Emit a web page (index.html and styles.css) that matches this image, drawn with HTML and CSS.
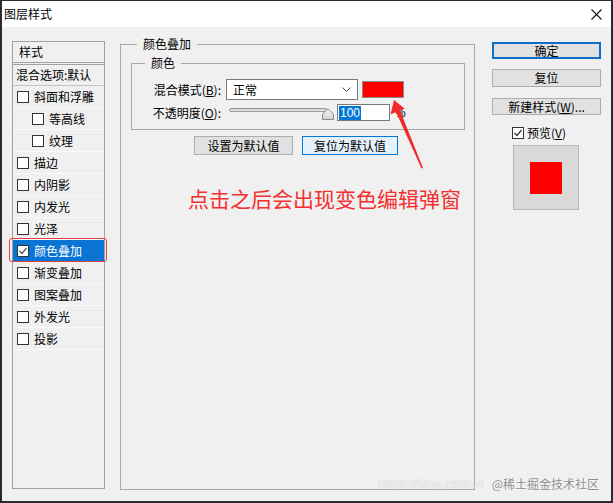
FILE: index.html
```html
<!DOCTYPE html>
<html lang="zh">
<head>
<meta charset="utf-8">
<title>图层样式</title>
<link rel="stylesheet" href="styles.css">
</head>
<body>
<div class="window">
  <div class="titlebar">
    <span class="title">图层样式</span>
    <svg class="close" width="11" height="11" viewBox="0 0 11 11"><path d="M0.5 0.5 L10.5 10.5 M10.5 0.5 L0.5 10.5" stroke="#111" stroke-width="1.1" fill="none"/></svg>
  </div>
  <div class="content">
    <div class="stylelist">
      <div class="sl-head">样式</div>
      <div class="sl-blend">混合选项:默认</div>
      <div class="sl-row"><span class="cb"></span>斜面和浮雕</div>
      <div class="sl-row sub"><span class="cb"></span>等高线</div>
      <div class="sl-row sub"><span class="cb"></span>纹理</div>
      <div class="sl-row"><span class="cb"></span>描边</div>
      <div class="sl-row"><span class="cb"></span>内阴影</div>
      <div class="sl-row"><span class="cb"></span>内发光</div>
      <div class="sl-row"><span class="cb"></span>光泽</div>
      <div class="sl-row selected"><span class="cb"><svg width="10" height="10" viewBox="0 0 10 10"><polyline points="1.5,5 4,7.5 8.5,2" stroke="#555" stroke-width="1.2" fill="none"/></svg></span>颜色叠加<span class="mark"></span></div>
      <div class="sl-row"><span class="cb"></span>渐变叠加</div>
      <div class="sl-row"><span class="cb"></span>图案叠加</div>
      <div class="sl-row"><span class="cb"></span>外发光</div>
      <div class="sl-row"><span class="cb"></span>投影</div>
    </div>

    <div class="group main">
      <div class="legend main-legend">颜色叠加</div>
      <div class="group inner">
        <div class="legend inner-legend">颜色</div>
        <div class="frow r1">
          <span class="lbl">混合模式(<u>B</u>):</span>
          <div class="select"><span>正常</span><svg width="9" height="6" viewBox="0 0 9 6"><polyline points="0.5,0.5 4.5,4.5 8.5,0.5" stroke="#444" stroke-width="1" fill="none"/></svg></div>
          <div class="swatch"></div>
        </div>
        <div class="frow r2">
          <span class="lbl">不透明度(<u>O</u>):</span>
          <div class="slider">
            <div class="track"></div>
            <svg class="thumb" width="12" height="12" viewBox="0 0 12 12"><defs><linearGradient id="tg" x1="0" y1="0" x2="0" y2="1"><stop offset="0" stop-color="#f4f4f4"/><stop offset="1" stop-color="#d4d4d4"/></linearGradient></defs><polygon points="0.5,11.5 0.5,6 6,0.8 11.5,6 11.5,11.5" fill="url(#tg)" stroke="#8a8a8a" stroke-width="1"/></svg>
          </div>
          <div class="num"><span class="sel">100</span></div>
          <span class="pct">%</span>
        </div>
      </div>
      <div class="btnrow">
        <button class="btn">设置为默认值</button>
        <button class="btn focus">复位为默认值</button>
      </div>
    </div>

    <div class="side">
      <button class="btn sbtn default">确定</button>
      <button class="btn sbtn tall">复位</button>
      <button class="btn sbtn">新建样式(<u>W</u>)...</button>
      <div class="preview-row"><span class="cb"><svg width="10" height="10" viewBox="0 0 10 10"><polyline points="1.5,5 4,7.5 8.5,2" stroke="#333" stroke-width="1.2" fill="none"/></svg></span><span>预览(<u>V</u>)</span></div>
      <div class="preview"><div class="preview-sq"></div></div>
    </div>
  </div>

  <div class="annot">点击之后会出现变色编辑弹窗</div>
  <svg class="arrow" width="40" height="72" viewBox="388 99 40 72"><polygon points="394,100 404.5,108.5 400,110.5 423,168 421.5,168.5 396,112 390.5,114.5" fill="#f22a2a"/></svg>
  <div class="watermark"><span class="wm-url">https://blog.csdn.n</span><span class="wm-site">@稀土掘金技术社区</span></div>
</div>
</body>
</html>
```

FILE: styles.css
```css
* { box-sizing: border-box; }

html, body {
  margin: 0;
  padding: 0;
  background: #262626;
}

body {
  font-family: "Noto Sans CJK SC", "Liberation Sans", sans-serif;
  font-size: 12px;
  line-height: 14px;
  color: #000;
}

.window {
  position: relative;
  width: 613px;
  height: 503px;
  border-style: solid;
  border-color: #2a2a2a;
  border-width: 1px 2px 2px 2px;
  background: #f0f0f0;
  display: flex;
  flex-direction: column;
}

.titlebar {
  height: 26px;
  background: #fff;
  display: flex;
  align-items: center;
  justify-content: space-between;
  padding: 0 9px 0 2px;
  flex: none;
}

.title { font-size: 12px; }

.close { display: block; }

.content {
  flex: 1;
  display: flex;
  align-items: flex-start;
  padding: 14px 0 0 10px;
}

/* left style list */
.stylelist {
  width: 93px;
  height: 448px;
  border: 1px solid #a0a0a0;
  flex: none;
}

.sl-head {
  height: 23px;
  padding: 3px 0 0 6px;
  border-bottom: 3px double #a0a0a0;
}

.sl-blend {
  height: 21px;
  padding: 3px 0 0 3px;
  border-bottom: 1px solid #c4c4c4;
  white-space: nowrap;
}

.sl-row {
  position: relative;
  height: 22px;
  display: flex;
  align-items: center;
  padding-left: 4px;
  border-bottom: 1px solid #fbfbfb;
}

.sl-row.sub { padding-left: 19px; }

.cb {
  width: 12px;
  height: 12px;
  border: 1px solid #333;
  background: #fff;
  margin-right: 5px;
  flex: none;
  display: flex;
  align-items: center;
  justify-content: center;
}

.sl-row.selected {
  background: #0a74d4;
  color: #fff;
}

.mark {
  position: absolute;
  left: -4px;
  right: -3px;
  top: -2px;
  bottom: -1px;
  border: 1px solid #e2403c;
  border-radius: 3px;
}

/* group boxes */
.group {
  border: 1px solid #a8a8a8;
}

.legend {
  width: fit-content;
  margin-top: -8px;
  padding: 0 6px;
  line-height: 14px;
  background: #f0f0f0;
}

.main {
  width: 355px;
  height: 446px;
  margin: 3px 0 0 15px;
  padding: 0 9px 0 10px;
  flex: none;
}

.main-legend { margin-left: 6px; }

.inner {
  margin-top: 12px;
  padding-bottom: 8px;
}

.inner-legend { margin-left: 13px; }

.frow {
  display: flex;
  align-items: center;
}

.r1 { margin-top: 9px; height: 21px; }
.r2 { margin-top: 4px; height: 17px; }

.lbl {
  width: 89px;
  text-align: right;
  white-space: nowrap;
}

.select {
  width: 132px;
  height: 21px;
  margin-left: 5px;
  border: 1px solid #7a7a7a;
  background: #fff;
  display: flex;
  align-items: center;
  justify-content: space-between;
  padding: 0 6px 0 6px;
}

.swatch {
  width: 42px;
  height: 17px;
  margin-left: 4px;
  background: #ff0000;
  border: 1px solid #8a8a8a;
}

.slider {
  position: relative;
  width: 105px;
  height: 17px;
  margin-left: 8px;
}

.track {
  margin-top: 4px;
  width: 98px;
  height: 4px;
  border: 1px solid #9a9a9a;
  border-radius: 2px;
  background: linear-gradient(#c8c8c8, #eeeeee);
}

.thumb {
  position: absolute;
  left: 93px;
  top: 4px;
}

.num {
  width: 53px;
  height: 17px;
  margin-left: 3px;
  border: 1px solid #7a7a7a;
  background: #fff;
  display: flex;
  align-items: center;
  padding-left: 1px;
}

.sel {
  background: #0078d7;
  color: #fff;
  font-family: "Liberation Sans", sans-serif;
  font-size: 12px;
  line-height: 14px;
  padding: 0 1px;
}

.pct {
  margin-left: 5px;
  font-family: "Liberation Sans", sans-serif;
}

.btnrow {
  display: flex;
  gap: 9px;
  margin-top: 6px;
  padding-left: 63px;
}

.btn {
  font-family: "Noto Sans CJK SC", "Liberation Sans", sans-serif;
  font-size: 12px;
  line-height: 14px;
  color: #000;
  background: #e1e1e1;
  border: 1px solid #adadad;
  padding: 0;
  height: 19px;
  margin: 0;
}

.btnrow .btn { width: 99px; }
.btnrow .btn.focus { width: 96px; }

.btn.focus {
  background: #e5f1fb;
  border-color: #0078d7;
}

/* right column */
.side {
  width: 109px;
  margin: 1px 0 0 17px;
  display: flex;
  flex-direction: column;
  flex: none;
}

.sbtn {
  width: 109px;
  height: 17px;
  margin-top: 11px;
}

.sbtn.default {
  margin-top: 0;
  border: 2px solid #0f6ec6;
}

.sbtn.tall { height: 18px; margin-top: 10px; }

.preview-row {
  display: flex;
  align-items: center;
  margin: 11px 0 0 20px;
  height: 13px;
}

.preview-row .cb { margin-right: 3px; }

.preview {
  width: 66px;
  height: 65px;
  margin: 6px 0 0 21px;
  background: #d9d9d9;
  border: 1px solid #b8b8b8;
  display: flex;
  align-items: center;
  justify-content: center;
}

.preview-sq {
  width: 32px;
  height: 32px;
  background: #ff0000;
}

/* annotations (overlay) */
.annot {
  position: absolute;
  left: 186px;
  top: 185px;
  font-size: 21px;
  line-height: 24px;
  color: #f52f2f;
  white-space: nowrap;
}

.arrow {
  position: absolute;
  left: 386px;
  top: 98px;
}

.watermark {
  position: absolute;
  right: 12px;
  top: 475px;
  display: flex;
  gap: 8px;
  font-size: 12px;
  line-height: 16px;
  white-space: nowrap;
}

.wm-url {
  color: rgba(255, 255, 255, 0.75);
  text-shadow: 0 0 1px rgba(0, 0, 0, 0.25);
  font-family: "Liberation Sans", sans-serif;
  font-size: 13px;
}

.wm-site {
  color: #8c8c8c;
  text-shadow: 0 0 1px #fff, 0 0 1px #fff;
}
```
